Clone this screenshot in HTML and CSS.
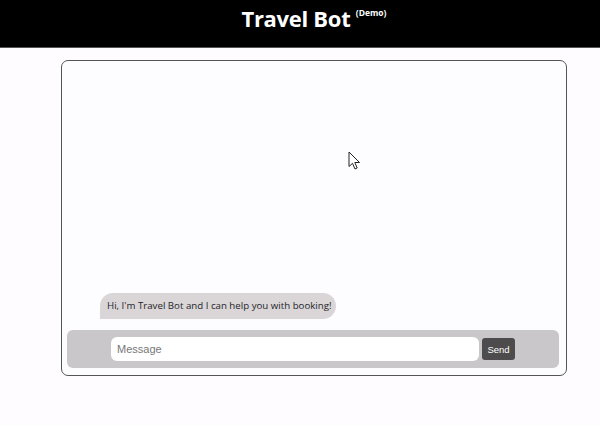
FILE: index.html
```html
<!DOCTYPE html>
<html>
<head>
<meta charset="utf-8">
<link rel="stylesheet" href="styles.css">
</head>
<body>
<header class="header">
  <h1 class="title">Travel Bot <sup class="demo">(Demo)</sup></h1>
</header>
<main class="chat">
  <div class="messages">
    <div class="bubble">Hi, I'm Travel Bot and I can help you with booking!</div>
  </div>
  <form class="composer">
    <input class="input" type="text" placeholder="Message">
    <button class="send" type="button">Send</button>
  </form>
</main>
<svg class="cursor" width="14" height="20" viewBox="0 0 14 20">
  <path d="M1 1 L1 15.5 L4.5 12.3 L7 18 L9.2 17 L6.8 11.5 L11.5 11.5 Z" fill="#fff" stroke="#222" stroke-width="1" stroke-linejoin="round"/>
</svg>
</body>
</html>
```
FILE: styles.css
```css
html, body {
  margin: 0;
  padding: 0;
  background: #fefcff;
  font-family: "Open Sans", "Noto Sans", sans-serif;
}
.header {
  background: #000;
  height: 47px;
  border-bottom: 1px solid #555;
  display: flex;
  justify-content: center;
}
.title {
  margin: 3px 0 0 0;
  color: #fff;
  font-family: "Open Sans", sans-serif;
  font-weight: 700;
  font-size: 22px;
  line-height: 30px;
  letter-spacing: -0.3px;
  padding-left: 28px;
}
.demo {
  font-size: 8.5px;
  letter-spacing: 0;
  vertical-align: 0;
  position: relative;
  top: -11px;
  margin-left: 0;
}
.chat {
  margin: 12px 0 0 61px;
  width: 504px;
  height: 314px;
  border: 1px solid #555;
  border-radius: 7px;
  background: #fdfcff;
  display: flex;
  flex-direction: column;
}
.messages {
  flex: 1;
  display: flex;
  flex-direction: column;
  justify-content: flex-end;
  padding: 0 0 11px 38px;
}
.bubble {
  align-self: flex-start;
  background: #dad6d7;
  color: #1e1e2a;
  font-family: "Open Sans", sans-serif;
  font-size: 9.7px;
  line-height: 26px;
  height: 26px;
  padding: 0 4px 0 7px;
  border-radius: 13px 13px 13px 0;
}
.composer {
  margin: 0 7px 7px 5px;
  height: 38px;
  background: #c9c7c9;
  border-radius: 6px;
  display: flex;
  align-items: center;
  padding: 0 44px 0 44px;
}
.input {
  flex: 1;
  height: 24px;
  border: none;
  border-radius: 6px;
  background: #fff;
  padding: 0 6px;
  font-family: "Liberation Sans", Arial, sans-serif;
  font-size: 11px;
  color: #333;
  outline: none;
  box-sizing: border-box;
}
.input::placeholder {
  color: #777;
}
.send {
  margin-left: 3px;
  width: 33px;
  height: 22px;
  border: none;
  border-radius: 3px;
  background: #4d4b4b;
  color: #fff;
  font-family: "Liberation Sans", Arial, sans-serif;
  font-size: 9.5px;
  padding: 0;
}
.cursor {
  position: absolute;
  left: 348px;
  top: 151px;
}
```
